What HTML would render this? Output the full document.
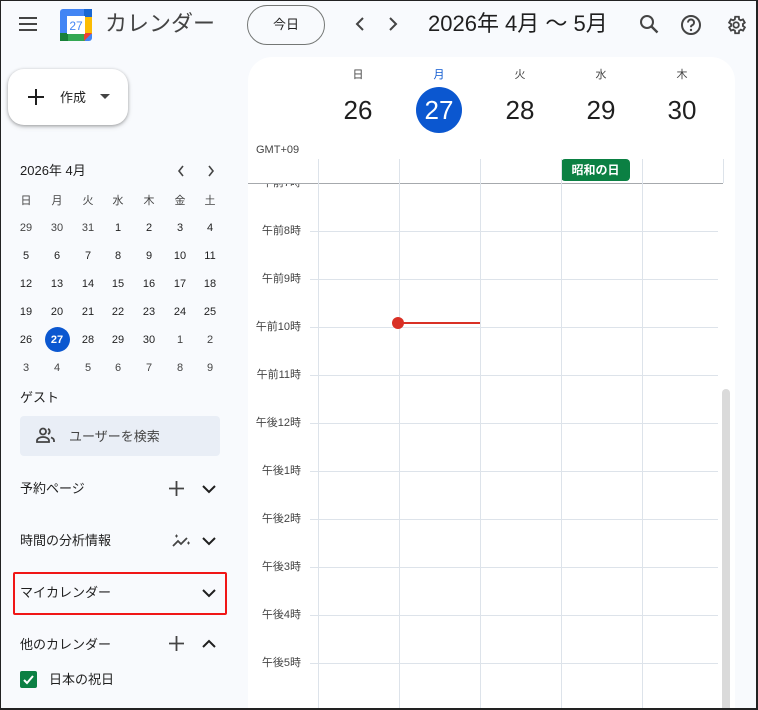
<!DOCTYPE html>
<html><head><meta charset="utf-8"><style>
*{margin:0;padding:0;box-sizing:border-box}
html{width:758px;height:710px;overflow:hidden}
body{width:758px;height:710px;overflow:hidden;background:#f8fafd;font-family:"Liberation Sans","Noto Sans CJK JP",sans-serif;color:#1f1f1f;position:relative}
.a{position:absolute}
.frame{position:absolute;left:0;top:0;width:758px;height:710px;border:1px solid #222;border-right-width:2px;border-bottom-width:2px;pointer-events:none;z-index:50}
.mc{position:absolute;width:30px;text-align:center;font-size:11px;line-height:14px;color:#1f1f1f}
.hl{position:absolute;left:310px;width:408px;height:1px;background:#dde3ea}
.vl{position:absolute;top:159px;height:550px;width:1px;background:#dde3ea}
.tl{position:absolute;right:457px;font-size:11px;color:#444;line-height:13px}
.dh{position:absolute;width:80px;text-align:center}
</style></head><body>
<div class="frame"></div>
<svg class="a" style="left:18px;top:15px" width="20" height="18" viewBox="0 0 20 18"><path d="M1 3h18M1 9h18M1 15h18" stroke="#444" stroke-width="2"/></svg>
<svg class="a" style="left:60px;top:9px" width="32" height="32" viewBox="0 0 32 32">
<rect x="0" y="0" width="32" height="32" rx="3" fill="#4285f4"/>
<rect x="24" y="7" width="8" height="18" fill="#fbbc04"/>
<rect x="0" y="24" width="25" height="8" fill="#34a853"/>
<path d="M24 24h8l-8 8z" fill="#ea4335"/>
<rect x="24" y="0" width="8" height="8" fill="#1967d2"/>
<rect x="0" y="24" width="8" height="8" fill="#188038"/>
<rect x="7" y="7" width="18" height="18" fill="#fff"/>
<text x="16" y="21" font-size="12" text-anchor="middle" fill="#4285f4" font-family="Liberation Sans">27</text></svg>
<div class="a" style="left:105px;top:9px;font-size:22px;color:#444;line-height:30px">カレンダー</div>
<div class="a" style="left:247px;top:5px;width:78px;height:40px;border:1px solid #747775;border-radius:20px;text-align:center;line-height:38px;font-size:13px">今日</div>
<svg class="a" style="left:354px;top:16px" width="12" height="16"><path d="M9 2L3 8l6 6" stroke="#444" stroke-width="2" fill="none"/></svg>
<svg class="a" style="left:387px;top:16px" width="12" height="16"><path d="M3 2l6 6-6 6" stroke="#444" stroke-width="2" fill="none"/></svg>
<div class="a" style="left:428px;top:10px;font-size:22px;line-height:28px">2026年 4月 ～ 5月</div>
<svg class="a" style="left:638px;top:13px" width="22" height="22" viewBox="0 0 22 22"><circle cx="9" cy="9" r="6" stroke="#444" stroke-width="2" fill="none"/><path d="M13.5 13.5l6 6" stroke="#444" stroke-width="2.4"/></svg>
<svg class="a" style="left:680px;top:14px" width="22" height="22" viewBox="0 0 22 22"><circle cx="11" cy="11" r="9" stroke="#444" stroke-width="2" fill="none"/><path d="M8 8.5a3 3 0 1 1 4 2.8c-.8.4-1 1-1 2" stroke="#444" stroke-width="2" fill="none"/><circle cx="11" cy="16" r="1.2" fill="#444"/></svg>
<svg class="a" style="left:726px;top:14px" width="22" height="22" viewBox="0 0 24 24"><path d="M19.4 13a7.5 7.5 0 0 0 0-2l2.1-1.6-2-3.5-2.5 1a7 7 0 0 0-1.700-1L15 3h-4l-.4 2.9a7 7 0 0 0-1.7 1l-2.5-1-2 3.5L6.6 11a7.5 7.5 0 0 0 0 2l-2.1 1.6 2 3.5 2.5-1a7 7 0 0 0 1.7 1L11 21h4l.4-2.9a7 7 0 0 0 1.7-1l2.5 1 2-3.5z" transform="translate(-1 0)" stroke="#444" stroke-width="2" fill="none"/><circle cx="11" cy="12" r="3" stroke="#444" stroke-width="2" fill="none"/></svg>
<div class="a" style="left:8px;top:69px;width:120px;height:56px;background:#fff;border-radius:16px;box-shadow:0 1px 3px rgba(0,0,0,.3),0 2px 6px rgba(0,0,0,.12)"></div>
<svg class="a" style="left:27px;top:88px" width="18" height="18"><path d="M9 1v16M1 9h16" stroke="#1f1f1f" stroke-width="2"/></svg>
<div class="a" style="left:60px;top:89px;font-size:13px;line-height:18px">作成</div>
<svg class="a" style="left:100px;top:94px" width="10" height="6"><path d="M0 0h10L5 5z" fill="#444"/></svg>
<div class="a" style="left:20px;top:162px;font-size:13px;line-height:18px">2026年 4月</div>
<svg class="a" style="left:176px;top:164px" width="10" height="14"><path d="M7 2L3 7l4 5" stroke="#444" stroke-width="1.6" fill="none"/></svg>
<svg class="a" style="left:206px;top:164px" width="10" height="14"><path d="M3 2l4 5-4 5" stroke="#444" stroke-width="1.6" fill="none"/></svg>
<div class="a" style="left:45px;top:327px;width:25px;height:25px;border-radius:50%;background:#0b57d0"></div>
<div id="mc"></div>
<div class="a" style="left:20px;top:389px;font-size:13px;line-height:18px">ゲスト</div>
<div class="a" style="left:20px;top:416px;width:200px;height:40px;background:#e9eef6;border-radius:4px"></div>
<svg class="a" style="left:36px;top:427px" width="20" height="16" viewBox="0 0 20 16"><circle cx="7" cy="4.5" r="3" stroke="#444" stroke-width="1.8" fill="none"/><path d="M1 15v-1.5c0-2 3-3.5 6-3.5s6 1.5 6 3.5V15z" stroke="#444" stroke-width="1.8" fill="none"/><path d="M12 1.8a3 3 0 0 1 0 5.4M15 10.5c1.8.6 3 1.6 3 3V15" stroke="#444" stroke-width="1.8" fill="none"/></svg>
<div class="a" style="left:69px;top:428px;font-size:13px;line-height:18px;color:#444">ユーザーを検索</div>
<div class="a" style="left:20px;top:480px;font-size:13px;line-height:18px">予約ページ</div>
<svg class="a" style="left:169px;top:481px" width="15" height="15"><path d="M7.5 0v15M0 7.5h15" stroke="#444" stroke-width="1.8"/></svg>
<svg class="a" style="left:202px;top:484px" width="14" height="10"><path d="M1 2l6 6 6-6" stroke="#1f1f1f" stroke-width="2" fill="none"/></svg>
<div class="a" style="left:20px;top:532px;font-size:13px;line-height:18px">時間の分析情報</div>
<svg class="a" style="left:172px;top:534px" width="18" height="14" viewBox="0 0 18 14"><path d="M1 12l5-5 3 3 6-6" stroke="#444" stroke-width="1.8" fill="none"/><path d="M3 2h3M4.5.5v3M15 9h3M16.5 7.5v3" stroke="#444" stroke-width="1"/></svg>
<svg class="a" style="left:202px;top:536px" width="14" height="10"><path d="M1 2l6 6 6-6" stroke="#1f1f1f" stroke-width="2" fill="none"/></svg>
<div class="a" style="left:13px;top:572px;width:214px;height:43px;border:2px solid #f01616;border-radius:2px"></div>
<div class="a" style="left:20px;top:584px;font-size:13px;line-height:18px">マイカレンダー</div>
<svg class="a" style="left:202px;top:588px" width="14" height="10"><path d="M1 2l6 6 6-6" stroke="#1f1f1f" stroke-width="2" fill="none"/></svg>
<div class="a" style="left:20px;top:636px;font-size:13px;line-height:18px">他のカレンダー</div>
<svg class="a" style="left:169px;top:636px" width="15" height="15"><path d="M7.5 0v15M0 7.5h15" stroke="#444" stroke-width="1.8"/></svg>
<svg class="a" style="left:202px;top:639px" width="14" height="10"><path d="M1 8l6-6 6 6" stroke="#1f1f1f" stroke-width="2" fill="none"/></svg>
<div class="a" style="left:20px;top:671px;width:17px;height:17px;background:#0b8043;border-radius:2px"></div>
<svg class="a" style="left:20px;top:671px" width="17" height="17"><path d="M4 9l3 3 6-7" stroke="#fff" stroke-width="2" fill="none"/></svg>
<div class="a" style="left:49px;top:671px;font-size:13px;line-height:18px">日本の祝日</div>
<div class="a" style="left:248px;top:57px;width:487px;height:653px;background:#fff;border-radius:24px 24px 0 0"></div>
<div id="days"></div>
<div class="a" style="left:256px;top:144px;font-size:11px;line-height:13px;color:#444">GMT+09</div>
<div class="a" style="left:561px;top:159px;width:69px;height:22px;background:#0b8043;border-radius:4px;color:#fff;font-size:12px;font-weight:bold;text-align:center;line-height:22px">昭和の日</div>
<div class="a" style="left:248px;top:183px;width:475px;height:1px;background:#a6a9ad"></div>
<div id="grid"></div>
<div class="a" style="left:392px;top:317px;width:12px;height:12px;border-radius:50%;background:#d93025"></div>
<div class="a" style="left:398px;top:322px;width:82px;height:2px;background:#d93025"></div>
<div class="a" style="left:722px;top:389px;width:8px;height:321px;background:#dadada;border-radius:4px 4px 0 0"></div>
<script>
var h='',rows=[["日","月","火","水","木","金","土"],[29,30,31,1,2,3,4],[5,6,7,8,9,10,11],[12,13,14,15,16,17,18],[19,20,21,22,23,24,25],[26,27,28,29,30,1,2],[3,4,5,6,7,8,9]];
var xs=[26,57,88,118,149,180,210];
rows.forEach(function(r,i){var y=i==0?194:221+(i-1)*28;r.forEach(function(v,j){var c='#1f1f1f',fw='normal';if(i==5&&j==1){c='#fff';fw='bold'}if((i==1&&j<3)||(i==5&&j>4)||i==6)c='#444';if(i==0)c='#444';h+='<div class="mc" style="left:'+(xs[j]-15)+'px;top:'+y+'px;color:'+c+';font-weight:'+fw+'">'+v+'</div>'})});
document.getElementById('mc').innerHTML=h;
var d='',dn=["日","月","火","水","木"],nums=[26,27,28,29,30];
for(var i=0;i<5;i++){var x=318+i*81;d+='<div class="dh" style="left:'+(x)+'px;top:68px;font-size:11px;line-height:14px;color:'+(i==1?'#0b57d0':'#444')+'">'+dn[i]+'</div>';
if(i==1)d+='<div class="a" style="left:'+(x+17)+'px;top:87px;width:46px;height:46px;border-radius:50%;background:#0b57d0"></div>';
d+='<div class="dh" style="left:'+x+'px;top:94px;font-size:26px;line-height:32px;color:'+(i==1?'#fff':'#1f1f1f')+'">'+nums[i]+'</div>'}
document.getElementById('days').innerHTML=d;
var g='';[318,399,480,561,642].forEach(function(x){g+='<div class="vl" style="left:'+x+'px"></div>'});
g+='<div class="vl" style="left:723px;height:24px"></div>';
var lb=["午前8時","午前9時","午前10時","午前11時","午後12時","午後1時","午後2時","午後3時","午後4時","午後5時"];
lb.forEach(function(t,i){var y=231+i*48;g+='<div class="hl" style="top:'+y+'px"></div><div class="tl" style="top:'+(y-6)+'px">'+t+'</div>'});
g+='<div class="hl" style="top:711px"></div>';
g+='<div class="tl" style="top:184px;height:5px;overflow:hidden"><div style="margin-top:-7px">午前7時</div></div>';
document.getElementById('grid').innerHTML=g;
</script>
</body></html>
